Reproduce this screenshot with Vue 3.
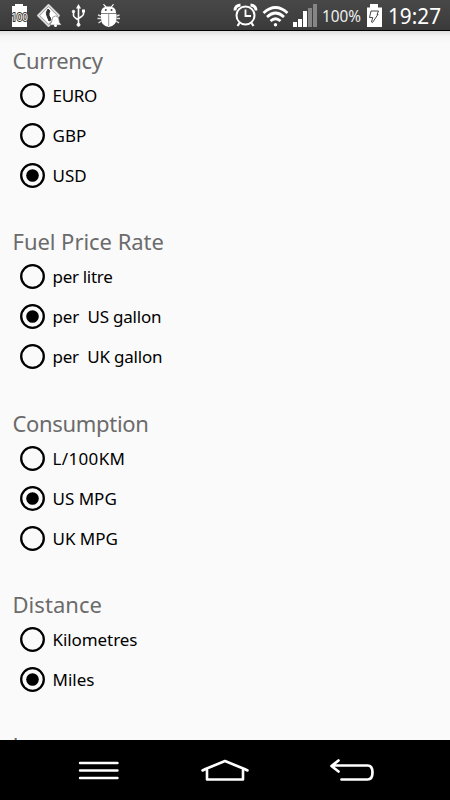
<script setup>
import { reactive } from 'vue'

const groups = reactive([
  { title: 'Currency', spacing: -0.38, selected: 2, options: [
    { label: 'EURO', spacing: -0.3 }, { label: 'GBP', spacing: 0 }, { label: 'USD', spacing: 0 }] },
  { title: 'Fuel Price Rate', spacing: -0.04, selected: 1, options: [
    { label: 'per litre', spacing: -0.3 }, { label: 'per  US gallon', spacing: -0.2 }, { label: 'per  UK gallon', spacing: -0.22 }] },
  { title: 'Consumption', spacing: -0.32, selected: 1, options: [
    { label: 'L/100KM', spacing: 0.35 }, { label: 'US MPG', spacing: 0 }, { label: 'UK MPG', spacing: 0 }] },
  { title: 'Distance', spacing: 0.05, selected: 1, options: [
    { label: 'Kilometres', spacing: -0.08 }, { label: 'Miles', spacing: 0 }] },
  { title: 'Language', spacing: 0, selected: 0, options: [] }
])
</script>

<template>
  <div class="screen">
    <header class="status">
      <svg class="left-icons" width="130" height="30" viewBox="0 0 130 30">
        <path d="M15 4h8v2h4v21H12V6h3z" fill="#fff" />
        <text x="11" y="20.500" font-size="10" textLength="17" lengthAdjust="spacingAndGlyphs" fill="#fff" stroke="#333" stroke-width="1.800" paint-order="stroke">100</text>
        <path d="M48.500 5L59 15.500 48.500 26 38 15.500z" fill="#777" stroke="#ddd" stroke-width="1.800" stroke-linejoin="round" />
        <path d="M48.500 7L57 15.500 48.500 24 40 15.500z" fill="#fff" />
        <path d="M48 9q-3 4-1 7l2 5 2-1-1-3-1-1v-3l1-2z" fill="#333" stroke="#333" />
        <path d="M50 24q2-1 2-4 0-4 3.500-4t3.500 4q0 3 2 4v1H50z" fill="#fff" stroke="#666" stroke-width=".6" />
        <circle cx="55.500" cy="25.500" r="1.500" fill="#fff" />
        <g fill="none" stroke="#fff" stroke-width="1.600">
          <path d="M78.500 7v17M73.500 12v3.500q0 1.500 5 4.500M83.500 11v3q0 1.500-5 4.500" />
          <circle cx="78.500" cy="24.800" r="1.500" fill="#fff" stroke-width="1" />
          <circle cx="73.500" cy="11.500" r="1.200" fill="#fff" stroke-width="1" />
          <path d="M82 9.500h3v3h-3z" fill="#fff" stroke="none" />
          <path d="M78.500 4l2.500 4.500h-5z" fill="#fff" stroke="none" />
        </g>
        <path d="M101 13q0-5 4-6l-2-2.500 1-.5 2.500 2.500h4.500L113 4l1 .5-2 2.500q4 1 4 6z" fill="#fff" />
        <path d="M101 14h15.500v4q0 8-7.800 9-7.700-1-7.700-9z" fill="#fff" />
        <path d="M101 13.500h15.500M108.700 14v12" stroke="#888" stroke-width=".9" />
        <path d="M101 16l-3-1M101 18.500h-3.500M101.500 21l-3 2M116.500 16l3-1M116.500 18.500h3.500M116 21l3 2" stroke="#ddd" stroke-width="1.500" />
        <circle cx="105.800" cy="10" r="1" fill="#444" />
        <circle cx="111.500" cy="10" r="1" fill="#444" />
      </svg>
      <svg class="right-icons" width="220" height="30" viewBox="230 0 220 30">
        <g fill="none" stroke="#fff">
          <circle cx="245.500" cy="15.500" r="9" stroke-width="2" />
          <path d="M245.500 9.500v6.500h5.500" stroke-width="1.800" />
          <path d="M235 10.500q0-5 5.500-5.500M250.500 5q5.500.5 5.500 5.500" stroke-width="2.800" />
          <path d="M239.500 23l-2 3M251.500 23l2 3" stroke-width="2.200" />
          <path d="M263.500 13q12-11 24 0M267 17q8.500-8 17 0M270.500 21q5-4.500 10 0" stroke-width="2.700" />
          <circle cx="275.500" cy="24.700" r="1.700" fill="#fff" stroke="none" />
        </g>
        <path d="M293 22h4v5h-4zM298 19h4v8h-4zM303 11h4v16h-4z" fill="#fff" />
        <path d="M308 8h4v19h-4zM313 4h4v23h-4z" fill="#858585" />
        <text x="322" y="22" font-size="16" textLength="39" lengthAdjust="spacingAndGlyphs" fill="#eee">100%</text>
        <path d="M370 4h8v3.500h4V27h-15V7.500h3z" fill="#fff" />
        <path d="M371 11h7.500l-1.500 3.500 1-.2-5.500 8.200-1-.5 1.200-4.500h-3.200z" fill="#fff" stroke="#333" stroke-width=".9" />
        <text x="388" y="24" font-size="21.500" textLength="53" lengthAdjust="spacingAndGlyphs" fill="#fff">19:27</text>
      </svg>
    </header>

    <main class="content">
      <section v-for="g in groups" :key="g.title" class="group">
        <h2 :style="{ letterSpacing: g.spacing + 'px' }">{{ g.title }}</h2>
        <div v-for="(o, i) in g.options" :key="o.label" class="option" @click="g.selected = i">
          <svg class="radio" width="25" height="25" viewBox="0 0 25 25">
            <circle cx="12.500" cy="12.500" r="11.300" fill="none" stroke="#000" stroke-width="2.300" />
            <circle v-if="g.selected === i" cx="12.500" cy="12.500" r="6.300" fill="#000" />
          </svg>
          <span class="label" :style="{ letterSpacing: o.spacing + 'px' }">{{ o.label }}</span>
        </div>
      </section>
    </main>

    <nav class="navbar">
      <svg width="450" height="60" viewBox="0 740 450 60" fill="none" stroke="#fff" stroke-linecap="round" stroke-linejoin="round">
        <path d="M80 763h37.500M80 770.500h37.500M80 778h37.500" stroke-width="2.400" />
        <path d="M202.500 770.500l3-1.500 19.500-8 19.500 8 3 1.500M207 770v9.500h36V770" stroke-width="2.600" />
        <path d="M341.500 779.500h26q5 0 5-7t-5-7H332M338.500 760.500l-7 5.500 7 5.500" stroke-width="2.700" />
      </svg>
    </nav>
  </div>
</template>

<style>
body { margin: 0; }
</style>

<style scoped>
.screen {
  width: 450px;
  height: 800px;
  display: flex;
  flex-direction: column;
  overflow: hidden;
  background: #fafafa;
  font-family: "Noto Sans", "Open Sans", sans-serif;
}
.status {
  flex: none;
  height: 30px;
  display: flex;
  justify-content: space-between;
  background: linear-gradient(#484848, #3a3a3a);
  border-bottom: 1px solid #000;
}
.status svg { display: block; }
.content {
  flex: 1;
  min-height: 0;
  overflow: hidden;
  padding-top: 17px;
  background: linear-gradient(#dedede, #f3f3f3 5px, #fafafa 12px);
}
.group { padding-bottom: 33.800px; }
h2 {
  margin: 0;
  padding-left: 12.500px;
  height: 27.500px;
  line-height: 25px;
  font-size: 22px;
  font-weight: 400;
  color: #6b6b6b;
  white-space: nowrap;
}
.option {
  height: 40px;
  display: flex;
  align-items: center;
  padding-left: 20px;
  cursor: pointer;
}
.radio { flex: none; }
.label {
  margin-left: 7.500px;
  padding-top: 1px;
  font-size: 17px;
  line-height: 24px;
  white-space: pre;
  color: #000;
}
.navbar {
  flex: none;
  height: 60px;
  background: #000;
}
.navbar svg { display: block; }
</style>
